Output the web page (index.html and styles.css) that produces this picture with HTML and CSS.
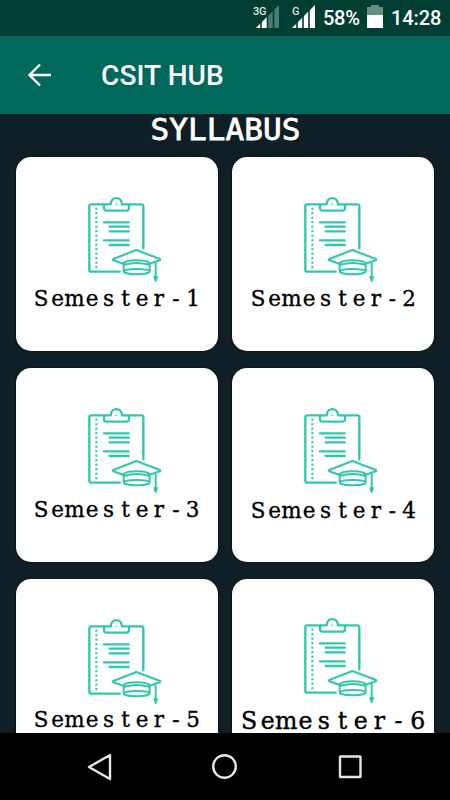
FILE: index.html
```
<!DOCTYPE html>
<html lang="en">
<head>
<meta charset="utf-8">
<title>CSIT HUB</title>
<link rel="stylesheet" href="styles.css">
</head>
<body>
<svg class="defs" aria-hidden="true">
  <symbol id="syllabus" viewBox="0 0 300 315">
    <g fill="none" stroke="#32c8a9" stroke-width="7" stroke-linejoin="round" stroke-linecap="round">
      <path d="M134 260H49q-6 0-6-6V64q0-6 6-6H107C108 33 140 33 141 58H199q6 0 6 6V190"/>
      <path d="M87 60V69q0 8 8 8H154q8 0 8-8V60"/>
      <path d="M87 112H161M104 125H161M104 139H161M87 166H161M104 180H161"/>
      <path d="M64 71V252" stroke-width="7" stroke-dasharray="0 13.5"/>
      <path d="M124 58V58.1" stroke-width="5"/>
      <path d="M146 237L115 226Q112 224 115 222L184 195L255 222Q257 225 254 226L224 236" stroke-width="6.5"/>
      <path d="M146 259V234C157 223 213 223 224 234V259C224 271 146 271 146 259C149 250 221 250 224 259M148 239Q185 229 222 239" stroke-width="6"/>
      <path d="M242 235V283M238 276L242 288L246 276Z" stroke-width="6"/>
    </g>
  </symbol>
</svg>
<div class="screen">
  <header class="status">
    <svg width="32" height="24" viewBox="0 0 32 24">
      <path d="M3 23L26 0V23Z" fill="#4d7c72"/><path d="M3 23L14 12V23Z" fill="#fff"/>
      <path d="M8 0V24M14.5 0V24M20.5 0V24" stroke="#003e32" stroke-width="1.6"/>
      <path d="M0 0H14V10H0Z" fill="#003e32"/>
      <text x="0" y="9.5" class="net">3G</text>
    </svg>
    <svg width="27" height="24" viewBox="0 0 27 24">
      <path d="M0 23L23 0V23Z" fill="#fff"/>
      <path d="M5 0V24M11 0V24M17 0V24" stroke="#003e32" stroke-width="1.6"/>
      <path d="M0 0H9V10H0Z" fill="#003e32"/>
      <text x="0" y="9.5" class="net">G</text>
    </svg>
    <span class="battery-text">58%</span>
    <svg class="battery" width="16" height="23" viewBox="0 0 16 23">
      <path d="M0 2H4V0H12V2H16V23H0Z" fill="#668f84"/><path d="M0 10H16V23H0Z" fill="#fff"/>
    </svg>
    <span class="clock">14:28</span>
  </header>
  <div class="appbar">
    <svg class="back" width="24" height="24" viewBox="0 0 24 24"><path d="M23 12H2M12 1.5L1.5 12L12 22.5" fill="none" stroke="#fff" stroke-width="2.3"/></svg>
    <h1 class="title">CSIT HUB</h1>
  </div>
  <main class="content">
    <h2 class="heading">SYLLABUS</h2>
    <div class="grid">
      <section class="card"><svg class="icon"><use href="#syllabus"/></svg><svg class="label" viewBox="0 0 202 30"><text y="24" x="25 41.5 58.5 76 92.5 109.5 126 143 160 177">Semester-1</text></svg></section>
      <section class="card"><svg class="icon"><use href="#syllabus"/></svg><svg class="label" viewBox="0 0 202 30"><text y="24" x="26 42.5 59.5 77 93.5 110.5 127 144 160.5 177">Semester-2</text></svg></section>
      <section class="card"><svg class="icon"><use href="#syllabus"/></svg><svg class="label" viewBox="0 0 202 30"><text y="23.5" x="25 41.5 58.5 76 92.5 109.5 126 143 160 176.5">Semester-3</text></svg></section>
      <section class="card"><svg class="icon"><use href="#syllabus"/></svg><svg class="label" viewBox="0 0 202 30"><text y="24.5" x="26 42.5 59.5 77 93.5 110.5 127 144 160.5 177">Semester-4</text></svg></section>
      <section class="card"><svg class="icon"><use href="#syllabus"/></svg><svg class="label" viewBox="0 0 202 30"><text y="23" x="25 41.5 58.5 76 92.5 109.5 126 143 160 177">Semester-5</text></svg></section>
      <section class="card raised"><svg class="icon"><use href="#syllabus"/></svg><svg class="label" viewBox="0 0 202 30"><text transform="scale(1.1)" y="23.9" x="15.6 32.4 49.3 66.9 83.5 100.5 117.1 134 151.3 168.8">Semester-6</text></svg></section>
    </div>
  </main>
  <nav class="navbar">
    <svg width="28" height="28" viewBox="0 0 28 28"><path d="M24 2V26L3 14Z"/></svg>
    <svg width="28" height="28" viewBox="0 0 28 28"><circle cx="13.5" cy="13.5" r="11.3"/></svg>
    <svg width="28" height="28" viewBox="0 0 28 28"><rect x="4" y="3.5" width="20.5" height="20.5" rx=".5"/></svg>
  </nav>
</div>
</body>
</html>
```
FILE: styles.css
```
* { box-sizing: border-box; }
body { margin: 0; background: #101f26; }
svg { display: block; flex: none; }
.defs { display: none; }
.screen { width: 450px; height: 800px; display: flex; flex-direction: column; overflow: hidden; font-family: Roboto, sans-serif; color: #fff; }
.status { height: 36px; flex: none; background: #003e32; display: flex; align-items: center; padding: 0 8px 2px 253px; }
.status svg:nth-child(2) { margin-left: 7px; }
.net { font: 500 11px Roboto, sans-serif; letter-spacing: -.3px; fill: #dce8e5; }
.battery-text, .clock { font-size: 20px; font-weight: 500; line-height: 36px; padding-top: 2px; white-space: nowrap; }
.battery-text { width: 44px; margin-left: 4px; letter-spacing: -.3px; }
.battery { position: relative; top: -1px; }
.clock { margin-left: 8px; letter-spacing: -.1px; }
.appbar { height: 78px; flex: none; background: #00695b; display: flex; align-items: center; padding-left: 28px; }
.title { margin: 0 0 0 49px; padding-top: 2px; font-size: 28px; font-weight: 500; line-height: 40px; letter-spacing: .1px; }
.content { flex: 1; min-height: 0; overflow: hidden; padding: 0 16px; background: #101f26; }
.heading { height: 43px; margin: 0; font: 400 31px/31px "DejaVu Sans Mono", monospace; letter-spacing: .1px; padding-left: 1px; text-align: center; -webkit-text-stroke: .8px #fff; }
.grid { display: grid; grid-template-columns: 202px 202px; column-gap: 14px; row-gap: 17px; }
.card { height: 194px; background: #fff; border-radius: 15px; padding-top: 28px; box-shadow: 0 0 2px #000; }
.icon { width: 100px; height: 105px; margin-left: 59px; }
.raised .icon { margin-top: -1px; }
.label { width: 202px; height: 30px; margin-top: -8px; overflow: visible; font: 21.5px "DejaVu Serif", serif; fill: #000; stroke: #000; stroke-width: .35; text-anchor: middle; }
.navbar { height: 67px; flex: none; background: #000; display: flex; justify-content: space-between; align-items: center; padding: 0 86px 0 86px; }
.navbar svg { fill: none; stroke: #e6e6e6; stroke-width: 2.4; stroke-linejoin: round; }
```
